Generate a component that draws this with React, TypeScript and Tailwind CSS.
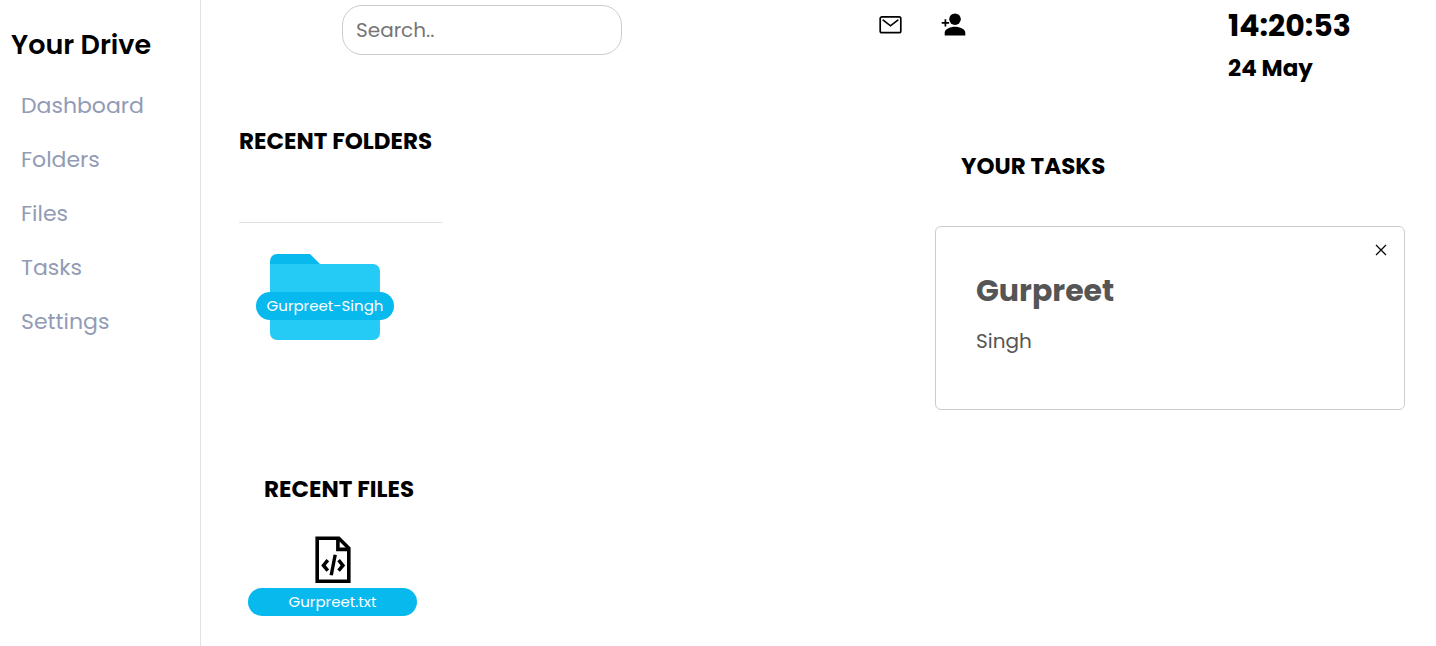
import React from 'react';

const links = ['Dashboard', 'Folders', 'Files', 'Tasks', 'Settings'];

function MailIcon() {
  return (
    <svg width="24" height="24" viewBox="0 0 24 24" fill="none" stroke="#000" strokeWidth="1.7" aria-hidden="true">
      <rect x="2.2" y="3.8" width="20.6" height="15.9" rx="1.8" />
      <path d="m5.2 7.2 7.3 5.6 7.3-5.6" strokeLinecap="round" />
    </svg>
  );
}

function AddPersonIcon() {
  return (
    <svg width="26" height="26" viewBox="0 0 26 26" aria-hidden="true">
      <circle cx="15" cy="7.2" r="5.8" />
      <path d="M4.7 23.5v-2.7c0-3.6 5.2-6 10.3-6s10.3 2.4 10.3 6v2.7z" />
      <path d="M5.4 7.2v7.4M1.7 10.9h7.4" stroke="#000" strokeWidth="1.7" />
    </svg>
  );
}

function FolderIcon() {
  return (
    <svg width="110" height="86" viewBox="0 0 110 86" className="block" aria-hidden="true">
      <path d="M0 20V7a7 7 0 0 1 7-7h33l16 16v4z" fill="#08b9ee" />
      <path d="M0 10h103a7 7 0 0 1 7 7v62a7 7 0 0 1-7 7H7a7 7 0 0 1-7-7z" fill="#25caf5" />
    </svg>
  );
}

function CodeFileIcon() {
  return (
    <svg width="36" height="48" viewBox="0 0 36 48" fill="none" stroke="#000" aria-hidden="true">
      <path d="M2.2 2.2h21.6l10 10v33.1H2.2z" strokeWidth="3.6" />
      <path d="M22.9 2v11.4H34" strokeWidth="3.6" />
      <path d="m12.8 24.2-4.3 5.2 4.3 5.2M23.6 24.2l4.3 5.2-4.3 5.2" strokeWidth="3.5" />
      <path d="m20.2 18.7-4 20.6" strokeWidth="3.4" />
    </svg>
  );
}

export default function App() {
  return (
    <div className="flex min-h-screen bg-white font-[Poppins,Inter,sans-serif] text-black">
      <aside className="w-[201px] shrink-0 border-r border-[#e2e2e2] pt-6">
        <h1 className="pl-[11px] text-[27px] leading-[42px] font-semibold">Your Drive</h1>
        <nav className="mt-[13px] flex flex-col pl-[21px]">
          {links.map((label) => (
            <a key={label} href="#" className="text-[22px] leading-[54px] text-[#929bb5]">
              {label}
            </a>
          ))}
        </nav>
      </aside>

      <div className="min-w-0 flex-1">
        <header className="grid grid-cols-[minmax(0,1fr)_350px_208px] items-start">
          <div className="pt-[5px] pl-[141px]">
            <input
              type="search"
              aria-label="Search"
              placeholder="Search.."
              className="block h-[50px] w-[280px] rounded-[20px] border border-[#cccccc] px-[13px] text-[20px] placeholder:text-[#757575]"
            />
          </div>
          <div className="flex items-center gap-[38px] pt-3">
            <button type="button" aria-label="Messages">
              <MailIcon />
            </button>
            <button type="button" aria-label="Add person">
              <AddPersonIcon />
            </button>
          </div>
          <div className="pt-[5px] font-bold">
            <p className="text-[30px] leading-[42px]">14:20:53</p>
            <p className="text-[23px] leading-[42px]">24 May</p>
          </div>
        </header>

        <main className="grid grid-cols-[minmax(0,1fr)_470px] pr-[31px] pl-[38px]">
          <div>
            <section className="w-[203px] pt-[34px]">
              <h2 className="text-[23px] leading-9 font-bold whitespace-nowrap">RECENT FOLDERS</h2>
              <hr className="mt-[63px] border-[#e0e0e0]" />
              <button type="button" className="mt-[31px] ml-[17px] grid w-[138px] place-items-center">
                <span className="col-start-1 row-start-1">
                  <FolderIcon />
                </span>
                <span className="col-start-1 row-start-1 mt-[18px] w-full rounded-full bg-[#08b9ee] text-[15px] leading-7 whitespace-nowrap text-white">
                  Gurpreet-Singh
                </span>
              </button>
            </section>

            <section className="pt-[131px] pl-[9px]">
              <h2 className="pl-4 text-[23px] leading-9 font-bold">RECENT FILES</h2>
              <button type="button" className="mt-[29px] flex w-[169px] flex-col items-center gap-1">
                <CodeFileIcon />
                <span className="w-full rounded-full bg-[#08b9ee] text-[15px] leading-7 text-white">
                  Gurpreet.txt
                </span>
              </button>
            </section>
          </div>

          <section className="pt-[59px]">
            <h2 className="pl-[26px] text-[23px] leading-9 font-bold">YOUR TASKS</h2>
            <article className="mt-[42px] flex items-start justify-between rounded-md border border-[#cccccc] pt-[17px] pr-[17px] pb-[49px] pl-10 text-[#555555]">
              <div className="pt-[26px]">
                <h3 className="text-[30px] leading-[42px] font-bold">Gurpreet</h3>
                <p className="mt-[10px] text-[20px] leading-[38px]">Singh</p>
              </div>
              <button type="button" aria-label="Remove task">
                <svg width="12" height="12" viewBox="0 0 12 12" fill="none" stroke="#000" strokeWidth="1.2" aria-hidden="true">
                  <path d="m1 1 10 10M11 1 1 11" />
                </svg>
              </button>
            </article>
          </section>
        </main>
      </div>
    </div>
  );
}
